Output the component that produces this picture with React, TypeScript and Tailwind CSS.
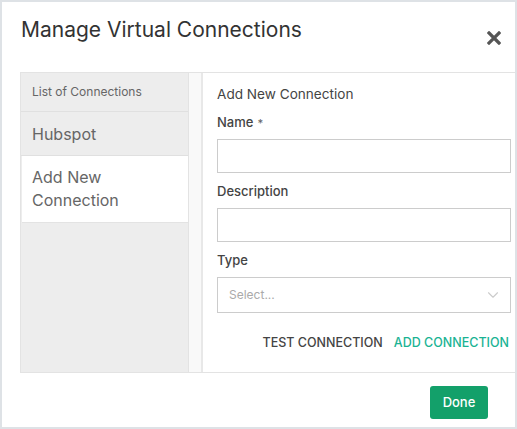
import { ChevronDown } from "lucide-react";

const font = { fontFamily: "Inter, 'Open Sans', sans-serif" };

function Field({ label, required }: { label: string; required?: boolean }) {
  return (
    <div className="flex flex-col">
      <label className="h-[20px] text-[13px] leading-[20px] font-medium text-[#444]">
        {label}
        {required && <span className="ml-1 text-[11px] text-[#666]">*</span>}
      </label>
      <input className="mt-[7px] h-[34px] w-full border border-[#ccc] bg-white outline-none" />
    </div>
  );
}

export default function App() {
  return (
    <div
      style={font}
      className="w-[517px] h-[429px] overflow-hidden border-2 border-[#dee2e6] bg-white text-[#333]"
    >
      {/* Header */}
      <div className="flex items-start justify-between pl-[19px] pr-[14px] pt-[14px] h-[70px]">
        <h1 className="text-[21px] leading-[28px] font-normal text-[#333]">
          Manage Virtual Connections
        </h1>
        <button className="mt-[15px] text-[#555]">
          <svg width="14" height="14" viewBox="0 0 14 14">
            <path d="M2 2 L12 12 M12 2 L2 12" stroke="#555" strokeWidth="3.2" strokeLinecap="square" />
          </svg>
        </button>
      </div>

      {/* Body */}
      <div className="ml-[18px] flex h-[301px] border border-r-0 border-[#e3e3e3]">
        {/* Sidebar */}
        <div className="flex w-[168px] flex-col bg-[#ededed] border-r border-[#e3e3e3]">
          <div className="h-[39px] flex items-center border-b border-[#e0e0e0] pl-[11px] text-[12px] text-[#666]">
            List of Connections
          </div>
          <div className="h-[44px] flex items-center border-b border-[#e0e0e0] pl-[11px] text-[16px] text-[#666]">
            Hubspot
          </div>
          <div className="ml-[1px] h-[67px] flex items-center border-b border-[#e3e3e3] bg-white pl-[10px] pr-4 text-[16px] leading-[23px] text-[#666]">
            Add New
            <br />
            Connection
          </div>
        </div>
        <div className="w-[14px] bg-[#f9f9f9] border-r-2 border-[#e8e8e8]" />

        {/* Form */}
        <div className="flex-1 pl-[14px] pr-[4px] pt-[11px]">
          <div className="h-[20px] text-[13.6px] leading-[20px] text-[#444]">Add New Connection</div>
          <div className="mt-[8px] flex flex-col gap-[8px]">
            <Field label="Name" required />
            <Field label="Description" />
            <div className="flex flex-col">
              <label className="h-[20px] text-[13px] leading-[20px] font-medium text-[#444]">Type</label>
              <div className="mt-[7px] flex h-[36px] items-center justify-between border border-[#ccc] pl-[11px] pr-[8px]">
                <span className="text-[12px] text-[#aaa]">Select...</span>
                <ChevronDown size={18} strokeWidth={1.5} className="text-[#ccc]" />
              </div>
            </div>
          </div>
          <div className="mt-[21px] flex justify-end gap-[11px] pr-[2px] text-[12.5px] font-medium">
            <button className="text-[#444]">TEST CONNECTION</button>
            <button className="text-[#1ab394]">ADD CONNECTION</button>
          </div>
        </div>
      </div>

      {/* Footer */}
      <div className="flex justify-end pr-[27px] pt-[13px]">
        <button className="h-[33px] w-[58px] rounded-[3px] bg-[#13a06a] text-[13px] font-medium text-white">
          Done
        </button>
      </div>
    </div>
  );
}
